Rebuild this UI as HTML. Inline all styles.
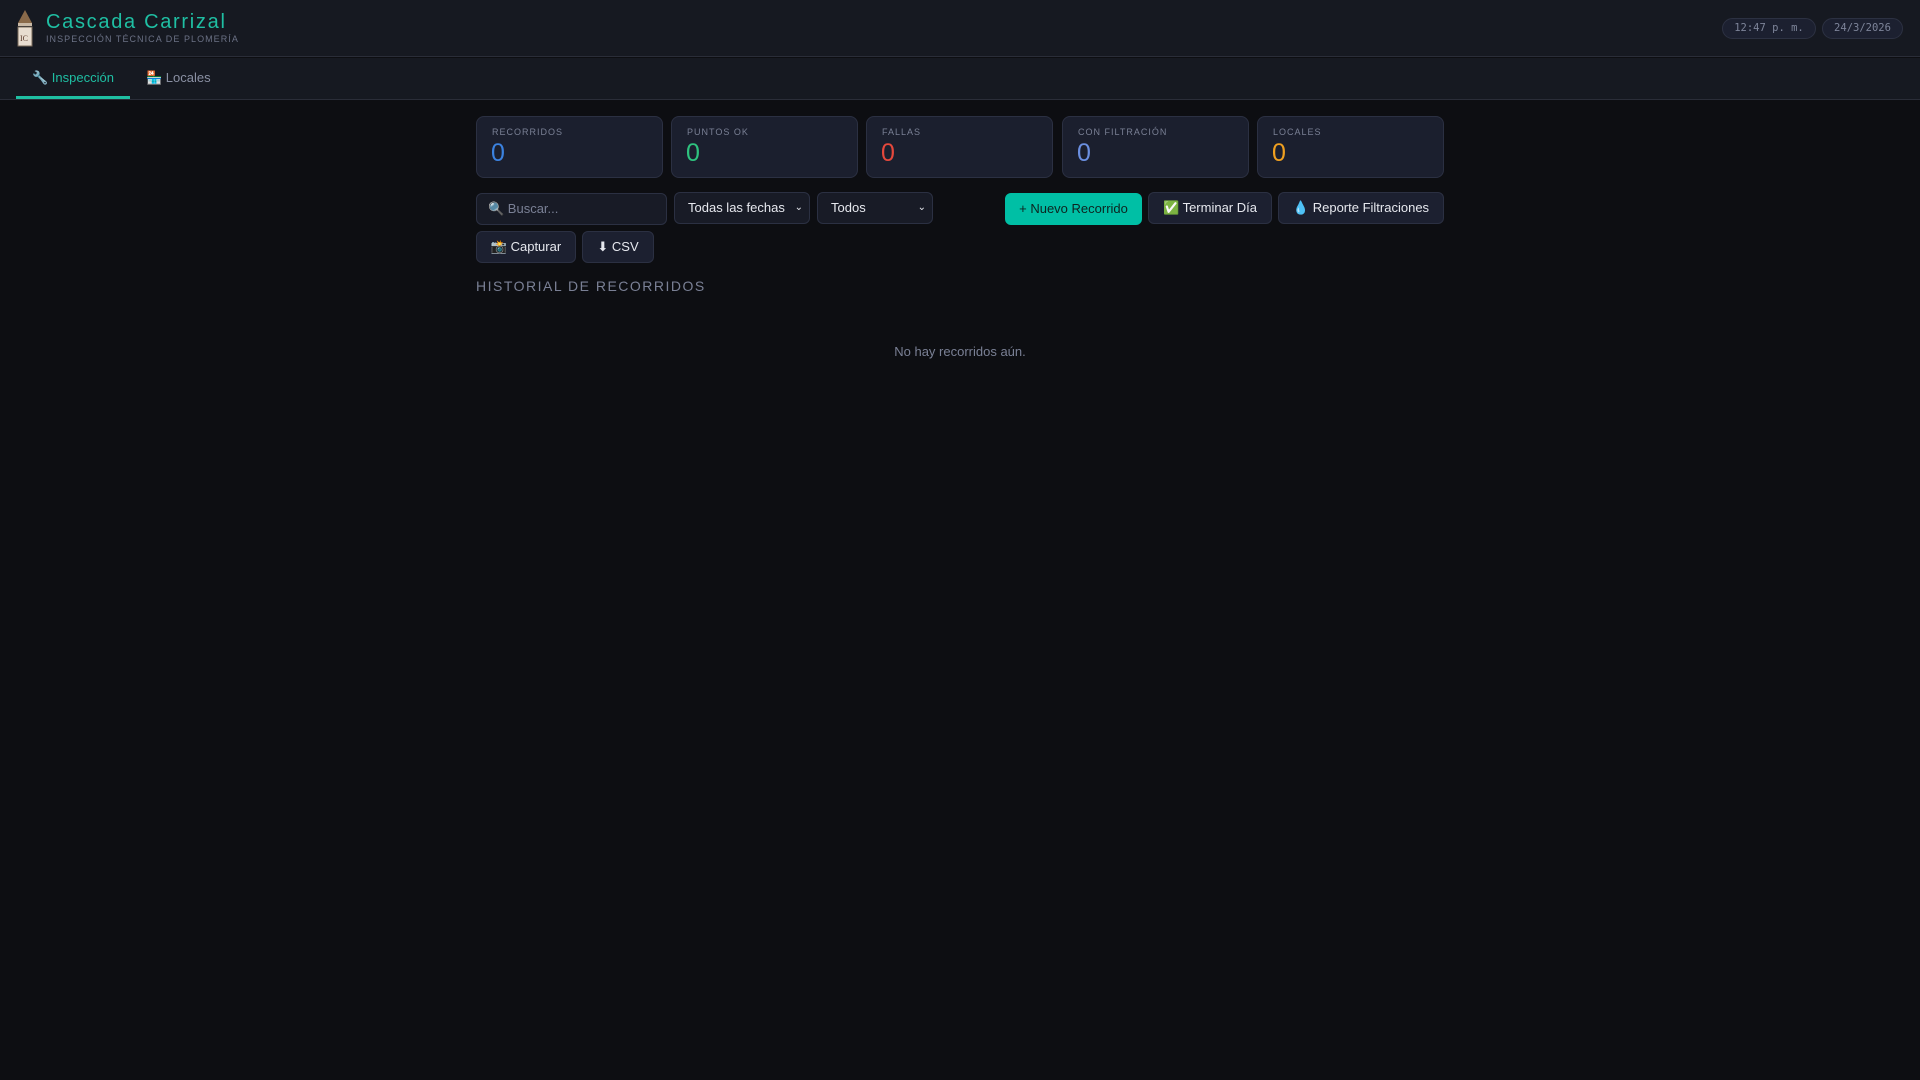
<!DOCTYPE html>
<html><head><meta charset="utf-8"><style>
*{box-sizing:border-box;margin:0;padding:0}
body{width:1920px;height:1080px;background:#0d0e12;font-family:"Liberation Sans",sans-serif;color:#e0e3ea;position:relative;overflow:hidden}
.hdr{position:absolute;left:0;top:0;width:1920px;height:57px;background:#161921;border-bottom:1px solid #2a2d38}
.nav{position:absolute;left:0;top:58px;width:1920px;height:42px;background:#161921;border-bottom:1px solid #2a2d38}
.title{position:absolute;left:46px;top:11px;font-size:20px;letter-spacing:1.7px;color:#1fbfa3}
.sub{position:absolute;left:46px;top:34px;font-size:9px;letter-spacing:1.05px;color:#6b7185}
.pill{position:absolute;top:18px;height:21px;border:1px solid #2c3142;background:#1c2030;border-radius:11px;font-family:"DejaVu Sans Mono",monospace;font-size:10.5px;color:#7d8499;text-align:center;line-height:19px}
.tab{position:absolute;top:12px;font-size:13px}
.card{position:absolute;top:116px;width:187px;height:62px;background:#1b1f2e;border:1px solid #2b3042;border-radius:8px}
.card .l{position:absolute;left:15px;top:10px;font-size:9px;letter-spacing:1px;color:#7a8095}
.card .n{position:absolute;left:14px;top:22px;font-size:25px}
.in{position:absolute;height:32px;background:#181b26;border:1px solid #2b3042;border-radius:6px;font-size:13px;color:#e6e8ee;line-height:30px;padding-left:13px}
.btn{position:absolute;height:32px;background:#1c2030;border:1px solid #2b3042;border-radius:6px;font-size:13px;color:#e6e8ee;line-height:30px;text-align:center}
</style></head><body>
<div class="hdr">
<svg style="position:absolute;left:16px;top:10px" width="18" height="38" viewBox="0 0 18 38"><polygon points="9,0 2,13 16,13" fill="#8a6a4a"/><rect x="2" y="13" width="14" height="3" fill="#c9b9a6"/><rect x="2" y="17" width="14" height="19" fill="#e8ddd0" stroke="#7a6a5a"/><text x="4" y="31" font-size="8" fill="#5a3a2a" font-family="Liberation Serif">IC</text></svg>
<div class="title">Cascada Carrizal</div>
<div class="sub">INSPECCIÓN TÉCNICA DE PLOMERÍA</div>
<div class="pill" style="left:1722px;width:94px">12:47 p. m.</div>
<div class="pill" style="left:1822px;width:81px">24/3/2026</div>
</div>
<div class="nav">
<div class="tab" style="left:32px;color:#1fbfa3">🔧 Inspección</div>
<div class="tab" style="left:146px;color:#8a90a3">🏪 Locales</div>
<div style="position:absolute;left:16px;top:38px;width:114px;height:3px;background:#1fbfa3"></div>
</div>
<div class="card" style="left:476px"><div class="l">RECORRIDOS</div><div class="n" style="color:#3b82e0">0</div></div>
<div class="card" style="left:671px"><div class="l">PUNTOS OK</div><div class="n" style="color:#2ec27e">0</div></div>
<div class="card" style="left:866px"><div class="l">FALLAS</div><div class="n" style="color:#e5483c">0</div></div>
<div class="card" style="left:1062px"><div class="l">CON FILTRACIÓN</div><div class="n" style="color:#6b8fe0">0</div></div>
<div class="card" style="left:1257px"><div class="l">LOCALES</div><div class="n" style="color:#f0a020">0</div></div>
<div class="in" style="left:476px;top:193px;width:191px;color:#7a8095;padding-left:11px">🔍 Buscar...</div>
<div class="in" style="left:674px;top:192px;width:136px">Todas las fechas <span style="position:absolute;right:6px;font-size:10px">⌄</span></div>
<div class="in" style="left:817px;top:192px;width:116px">Todos <span style="position:absolute;right:6px;font-size:10px">⌄</span></div>
<div class="btn" style="left:1005px;top:193px;width:137px;background:#00bfa5;border-color:#00bfa5;color:#0d2420">+ Nuevo Recorrido</div>
<div class="btn" style="left:1148px;top:192px;width:124px">✅ Terminar Día</div>
<div class="btn" style="left:1278px;top:192px;width:166px">💧 Reporte Filtraciones</div>
<div class="btn" style="left:476px;top:231px;width:100px">📸 Capturar</div>
<div class="btn" style="left:582px;top:231px;width:72px">⬇ CSV</div>
<div style="position:absolute;left:476px;top:278px;font-size:14px;letter-spacing:1.5px;color:#7a8095">HISTORIAL DE RECORRIDOS</div>
<div style="position:absolute;left:0;width:1920px;top:344px;text-align:center;font-size:13px;color:#7a8095">No hay recorridos aún.</div>
</body></html>
